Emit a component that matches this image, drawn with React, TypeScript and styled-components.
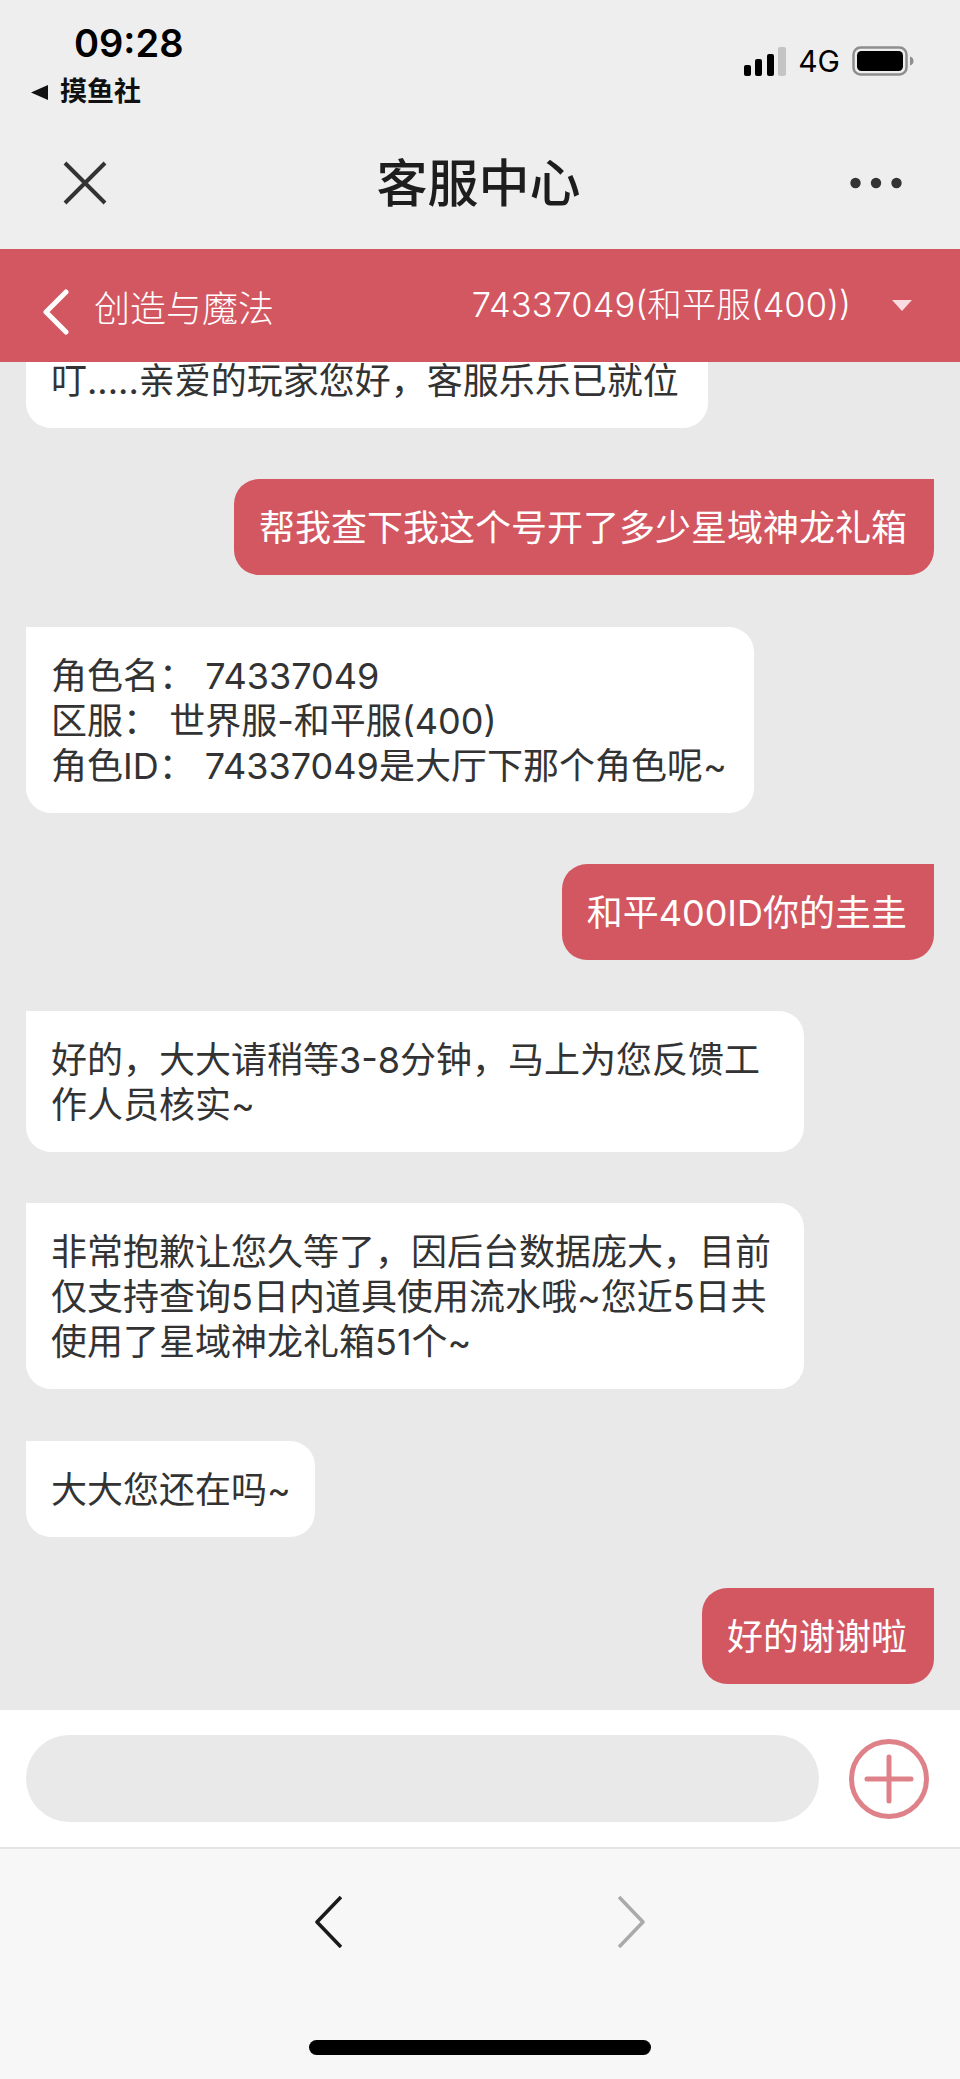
import React from "react";
import styled, { createGlobalStyle } from "styled-components";

const FONT = `Inter, "Noto Sans CJK SC", sans-serif`;

const Global = createGlobalStyle`
  html, body { margin: 0; padding: 0; background: #e9e9e9; }
  * { box-sizing: border-box; }
`;

const Page = styled.div`
  width: 960px;
  height: 2079px;
  display: flex;
  flex-direction: column;
  font-family: ${FONT};
  overflow: hidden;
`;

const TopChrome = styled.header`
  height: 249px;
  flex: none;
  background: #eeeeee;
  display: flex;
  flex-direction: column;
`;

const StatusBar = styled.div`
  height: 119px;
  padding: 21px 46px 0 31px;
  display: flex;
  justify-content: space-between;
  align-items: flex-start;
`;

const StatusLeft = styled.div`
  display: flex;
  flex-direction: column;
  align-items: flex-start;
`;

const Clock = styled.div`
  margin-left: 43px;
  font-size: 38px;
  line-height: 44px;
  font-weight: 600;
  color: #000;
`;

const BackApp = styled.div`
  margin-top: 9px;
  display: flex;
  align-items: center;
  gap: 12px;
  font-size: 27px;
  line-height: 36px;
  font-weight: 700;
  color: #111;
`;

const StatusRight = styled.div`
  margin-top: 25px;
  display: flex;
  align-items: center;
  gap: 12px;
  color: #000;
  font-size: 30px;
  line-height: 30px;
`;

const NavBar = styled.div`
  flex: 1;
  display: grid;
  grid-template-columns: 1fr auto 1fr;
  align-items: center;
  padding: 0 58px 3px;
`;

const NavTitle = styled.h1`
  margin: 2px 3px 0 0;
  font-size: 51px;
  line-height: 60px;
  font-weight: 500;
  color: #1d1d1d;
`;

const CloseIcon = styled.svg`
  display: block;
  margin-left: 5px;
`;

const MoreIcon = styled.svg`
  display: block;
  justify-self: end;
`;

const GameBar = styled.div`
  flex: none;
  height: 113px;
  background: #d35761;
  color: #fff;
  display: flex;
  align-items: center;
  padding: 0 48px 0 43px;
`;

const BackChevron = styled.svg`
  display: block;
  margin-top: 12px;
`;

const GameName = styled.span`
  margin: 6px 0 0 25px;
  font-size: 36px;
  font-weight: 300;
  line-height: 50px;
`;

const RoleName = styled.span`
  margin: 0 41px 2px auto;
  font-size: 34.5px;
  font-weight: 300;
  line-height: 50px;
`;

const Chat = styled.main`
  flex: none;
  height: 1348px;
  overflow: hidden;
  display: flex;
  flex-direction: column;
  justify-content: flex-end;
  gap: 51.3px;
  padding: 0 26px 26px;
  background: #e9e9e9;
`;

const Bubble = styled.div<{ $mine?: boolean; $width?: number }>`
  flex: none;
  align-self: ${(p) => (p.$mine ? "flex-end" : "flex-start")};
  width: ${(p) => (p.$width ? `${p.$width}px` : "auto")};
  padding: 27px 27px 24px 25px;
  font-size: 36px;
  line-height: 45px;
  font-weight: 400;
  white-space: pre-wrap;
  color: ${(p) => (p.$mine ? "#fff" : "#333")};
  background: ${(p) => (p.$mine ? "#d35761" : "#fff")};
  border-radius: ${(p) => (p.$mine ? "25px 0 25px 25px" : "0 25px 25px 25px")};
`;

const ShortBubble = styled(Bubble)`
  padding-right: 24px;
  white-space: nowrap;
`;

const InputBar = styled.div`
  flex: none;
  height: 137px;
  background: #fff;
  display: flex;
  align-items: center;
  justify-content: space-between;
  padding: 0 31px 0 26px;
`;

const InputField = styled.div`
  width: 793px;
  height: 87px;
  border-radius: 44px;
  background: #e9e9e9;
`;

const BottomBar = styled.footer`
  flex: 1;
  background: #f7f7f7;
  border-top: 2px solid #e4e4e4;
  display: flex;
  flex-direction: column;
  align-items: center;
`;

const BrowserNav = styled.div`
  margin-top: 47px;
  width: 330px;
  display: flex;
  justify-content: space-between;
`;

const HomeBar = styled.div`
  margin-top: 92px;
  width: 342px;
  height: 15px;
  border-radius: 8px;
  background: #000;
`;

const Triangle = () => (
  <svg width="17" height="15" viewBox="0 0 17 15">
    <path d="M0 7.5 17 0v15z" fill="#111" />
  </svg>
);

const Signal = () => (
  <svg width="42" height="29" viewBox="0 0 42 29">
    <rect x="0" y="18" width="7" height="11" rx="2" fill="#000" />
    <rect x="11" y="12" width="7" height="17" rx="2" fill="#000" />
    <rect x="23" y="7" width="7" height="22" rx="2" fill="#000" />
    <rect x="34" y="0" width="8" height="29" rx="2" fill="#c4c4c4" />
  </svg>
);

const Battery = () => (
  <svg width="62" height="30" viewBox="0 0 62 30">
    <rect x="1.5" y="1.5" width="53" height="27" rx="7" fill="none" stroke="#8e8e8e" strokeWidth="2.5" />
    <rect x="5" y="5" width="46" height="20" rx="4.5" fill="#000" />
    <path d="M58 10.5c2.5.8 3.5 2.4 3.5 4.5s-1 3.7-3.5 4.5z" fill="#8e8e8e" />
  </svg>
);

export default function App() {
  return (
    <Page>
      <Global />
      <TopChrome>
        <StatusBar>
          <StatusLeft>
            <Clock>09:28</Clock>
            <BackApp>
              <Triangle />
              摸鱼社
            </BackApp>
          </StatusLeft>
          <StatusRight>
            <Signal />
            <span>4G</span>
            <Battery />
          </StatusRight>
        </StatusBar>
        <NavBar>
          <CloseIcon width="44" height="44" viewBox="0 0 44 44">
            <path d="M2 2 42 42M42 2 2 42" stroke="#333" strokeWidth="4" fill="none" />
          </CloseIcon>
          <NavTitle>客服中心</NavTitle>
          <MoreIcon width="52" height="12" viewBox="0 0 52 12">
            <circle cx="5.5" cy="6" r="5.2" fill="#333" />
            <circle cx="26" cy="6" r="5.2" fill="#333" />
            <circle cx="46.5" cy="6" r="5.2" fill="#333" />
          </MoreIcon>
        </NavBar>
      </TopChrome>
      <GameBar>
        <BackChevron width="26" height="46" viewBox="0 0 26 46">
          <path d="M23 3 3 23l20 20" stroke="#fff" strokeWidth="5" strokeLinecap="round" strokeLinejoin="round" fill="none" />
        </BackChevron>
        <GameName>创造与魔法</GameName>
        <RoleName>74337049(和平服(400))</RoleName>
        <svg width="20" height="11" viewBox="0 0 20 11">
          <path d="M0 0h20L10 11z" fill="#f8dce0" />
        </svg>
      </GameBar>
      <Chat>
        <Bubble $width={682}>叮.....亲爱的玩家您好，客服乐乐已就位</Bubble>
        <Bubble $mine>帮我查下我这个号开了多少星域神龙礼箱</Bubble>
        <Bubble $width={728}>{"角色名： 74337049\n区服： 世界服-和平服(400)\n角色ID： 74337049是大厅下那个角色呢~"}</Bubble>
        <Bubble $mine>和平400ID你的圭圭</Bubble>
        <Bubble $width={778}>好的，大大请稍等3-8分钟，马上为您反馈工作人员核实~</Bubble>
        <Bubble $width={778}>非常抱歉让您久等了，因后台数据庞大，目前仅支持查询5日内道具使用流水哦~您近5日共使用了星域神龙礼箱51个~</Bubble>
        <ShortBubble>大大您还在吗~</ShortBubble>
        <Bubble $mine>好的谢谢啦</Bubble>
      </Chat>
      <InputBar>
        <InputField />
        <svg width="80" height="80" viewBox="0 0 80 80">
          <circle cx="40" cy="40" r="37.5" fill="#fff" stroke="#df8189" strokeWidth="5" />
          <path d="M18 40h44M40 18v44" stroke="#df8189" strokeWidth="5" strokeLinecap="round" fill="none" />
        </svg>
      </InputBar>
      <BottomBar>
        <BrowserNav>
          <svg width="27" height="52" viewBox="0 0 27 52">
            <path d="M26 1 2 26l24 25" stroke="#1a1a1a" strokeWidth="3.6" strokeLinejoin="round" fill="none" />
          </svg>
          <svg width="27" height="52" viewBox="0 0 27 52">
            <path d="M1 1 25 26 1 51" stroke="#aaaaaa" strokeWidth="3.6" strokeLinejoin="round" fill="none" />
          </svg>
        </BrowserNav>
        <HomeBar />
      </BottomBar>
    </Page>
  );
}
